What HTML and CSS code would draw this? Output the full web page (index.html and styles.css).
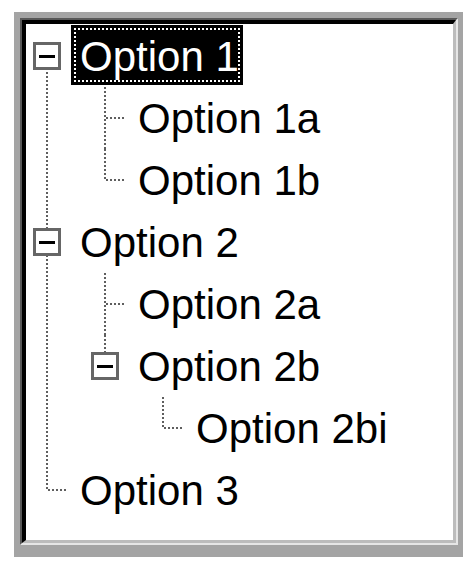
FILE: index.html
```html
<!DOCTYPE html>
<html lang="en">
<head>
    <meta charset="UTF-8">
    <meta name="viewport" content="width=device-width, initial-scale=1.0">
    <title>Tree View</title>
    <link rel="stylesheet" href="styles.css">
</head>
<body>
    <div class="frame">
        <div class="tree-box">
            <div class="tree-inner">
                <ul class="tree-list tree-root">
                    <li class="has-children">
                        <div class="node-row">
                            <div class="node-gutter"><span class="toggle"></span></div>
                            <span class="node-label selected">Option 1</span>
                        </div>
                        <ul class="tree-list">
                            <li>
                                <div class="node-row">
                                    <div class="node-gutter"></div>
                                    <span class="node-label">Option 1a</span>
                                </div>
                            </li>
                            <li>
                                <div class="node-row">
                                    <div class="node-gutter"></div>
                                    <span class="node-label">Option 1b</span>
                                </div>
                            </li>
                        </ul>
                    </li>
                    <li class="has-children">
                        <div class="node-row">
                            <div class="node-gutter"><span class="toggle"></span></div>
                            <span class="node-label">Option 2</span>
                        </div>
                        <ul class="tree-list">
                            <li>
                                <div class="node-row">
                                    <div class="node-gutter"></div>
                                    <span class="node-label">Option 2a</span>
                                </div>
                            </li>
                            <li class="has-children">
                                <div class="node-row">
                                    <div class="node-gutter"><span class="toggle"></span></div>
                                    <span class="node-label">Option 2b</span>
                                </div>
                                <ul class="tree-list">
                                    <li>
                                        <div class="node-row">
                                            <div class="node-gutter"></div>
                                            <span class="node-label">Option 2bi</span>
                                        </div>
                                    </li>
                                </ul>
                            </li>
                        </ul>
                    </li>
                    <li>
                        <div class="node-row">
                            <div class="node-gutter"></div>
                            <span class="node-label">Option 3</span>
                        </div>
                    </li>
                </ul>
            </div>
        </div>
    </div>
</body>
</html>
```

FILE: styles.css
```css
body {
    margin: 0;
    background-color: #fff;
    font-family: 'Liberation Sans', Arial, sans-serif;
}

.frame {
    box-sizing: border-box;
    width: 449px;
    height: 545px;
    margin: 12px 0 0 14px;
    padding: 6px 5px 12px 6px;
    background-color: #a4a4a4;
}

.tree-box {
    box-sizing: border-box;
    height: 100%;
    border: 2px solid;
    border-color: #585858 #e6e6e6 #e6e6e6 #585858;
}

.tree-inner {
    box-sizing: border-box;
    height: 100%;
    background-color: #fff;
    border-top: 4px solid #000;
    border-left: 4px solid #000;
    border-right: 3px solid #bcbcbc;
    border-bottom: 3px solid #bcbcbc;
    overflow: hidden;
}

.tree-list {
    list-style: none;
    margin: 0;
    padding: 0;
}

.tree-root {
    padding-top: 1px;
}

.tree-list .tree-list {
    margin-left: 58px;
}

.tree-list li {
    position: relative;
}

/* dotted connector lines */
.tree-list li::before {
    content: '';
    position: absolute;
    left: 20px;
    top: 0;
    bottom: 0;
    width: 2px;
    background: repeating-linear-gradient(to bottom, #5e5e5e 0 2px, transparent 2px 4px);
}

.tree-list li:last-child::before {
    bottom: auto;
    height: 32px;
}

.tree-root > li:first-child::before {
    top: 31px;
}

.tree-list li::after {
    content: '';
    position: absolute;
    left: 22px;
    top: 30px;
    width: 20px;
    height: 2px;
    background: repeating-linear-gradient(to right, #5e5e5e 0 2px, transparent 2px 4px);
}

.tree-list li.has-children::after {
    display: none;
}

.node-row {
    display: flex;
    height: 62px;
}

.node-gutter {
    width: 45px;
    flex-shrink: 0;
    display: flex;
    align-items: center;
}

.toggle {
    position: relative;
    z-index: 1;
    box-sizing: border-box;
    width: 28px;
    height: 28px;
    margin-left: 7px;
    border: 3px solid #666;
    background-color: #fff;
    display: flex;
    align-items: center;
    justify-content: center;
}

.toggle::before {
    content: '';
    width: 16px;
    height: 3px;
    background-color: #000;
}

.node-label {
    align-self: flex-start;
    height: 60px;
    line-height: 64px;
    padding: 0 4px 0 9px;
    font-size: 42px;
    color: #000;
    white-space: nowrap;
}

.node-label.selected {
    background-color: #000;
    color: #fff;
    outline: 2px dotted #fff;
    outline-offset: -5px;
}
```
